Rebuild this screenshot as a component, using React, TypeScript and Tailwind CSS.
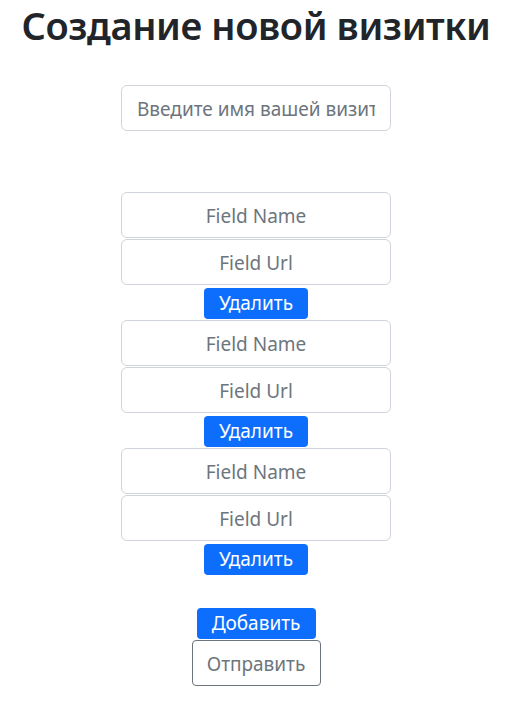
import React from "react";

const App: React.FC = () => {
  const fields = [0, 1, 2];

  return (
    <div className="flex flex-col items-center bg-white pr-[7px] text-[#212529] font-['Noto_Sans',sans-serif]">
      <h1 className="text-[38px] leading-[50px] font-semibold tracking-[-0.4px]">
        Создание новой визитки
      </h1>

      <input
        className="mt-[35px] w-[270px] h-[46px] px-[15px] pt-[2px] border border-[#ced4da] rounded-[6px] text-[19px] placeholder:text-[#6c757d] outline-none"
        placeholder="Введите имя вашей визитки"
      />

      <div className="mt-[61px] flex flex-col items-center">
        {fields.map((i) => (
          <div key={i} className="flex flex-col items-center">
            <input
              className="w-[270px] h-[46px] px-[15px] pt-[2px] border border-[#ced4da] rounded-[6px] text-[19px] text-center placeholder:text-[#6c757d] outline-none"
              placeholder="Field Name"
            />
            <input
              className="mt-[1px] w-[270px] h-[46px] px-[15px] pt-[2px] border border-[#ced4da] rounded-[6px] text-[19px] text-center placeholder:text-[#6c757d] outline-none"
              placeholder="Field Url"
            />
            <button className="mt-[3px] mb-[1px] w-[104px] h-[31px] bg-[#0d6efd] text-white text-[19px] rounded-[4px] leading-none">
              Удалить
            </button>
          </div>
        ))}
      </div>

      <button className="mt-[32px] w-[119px] h-[31px] bg-[#0d6efd] text-white text-[19px] rounded-[4px] leading-none">
        Добавить
      </button>
      <button className="mt-[1px] w-[129px] h-[46px] pt-[2px] border border-[#6c757d] text-[#6c757d] text-[19px] rounded-[4px] bg-white">
        Отправить
      </button>
    </div>
  );
};

export default App;
